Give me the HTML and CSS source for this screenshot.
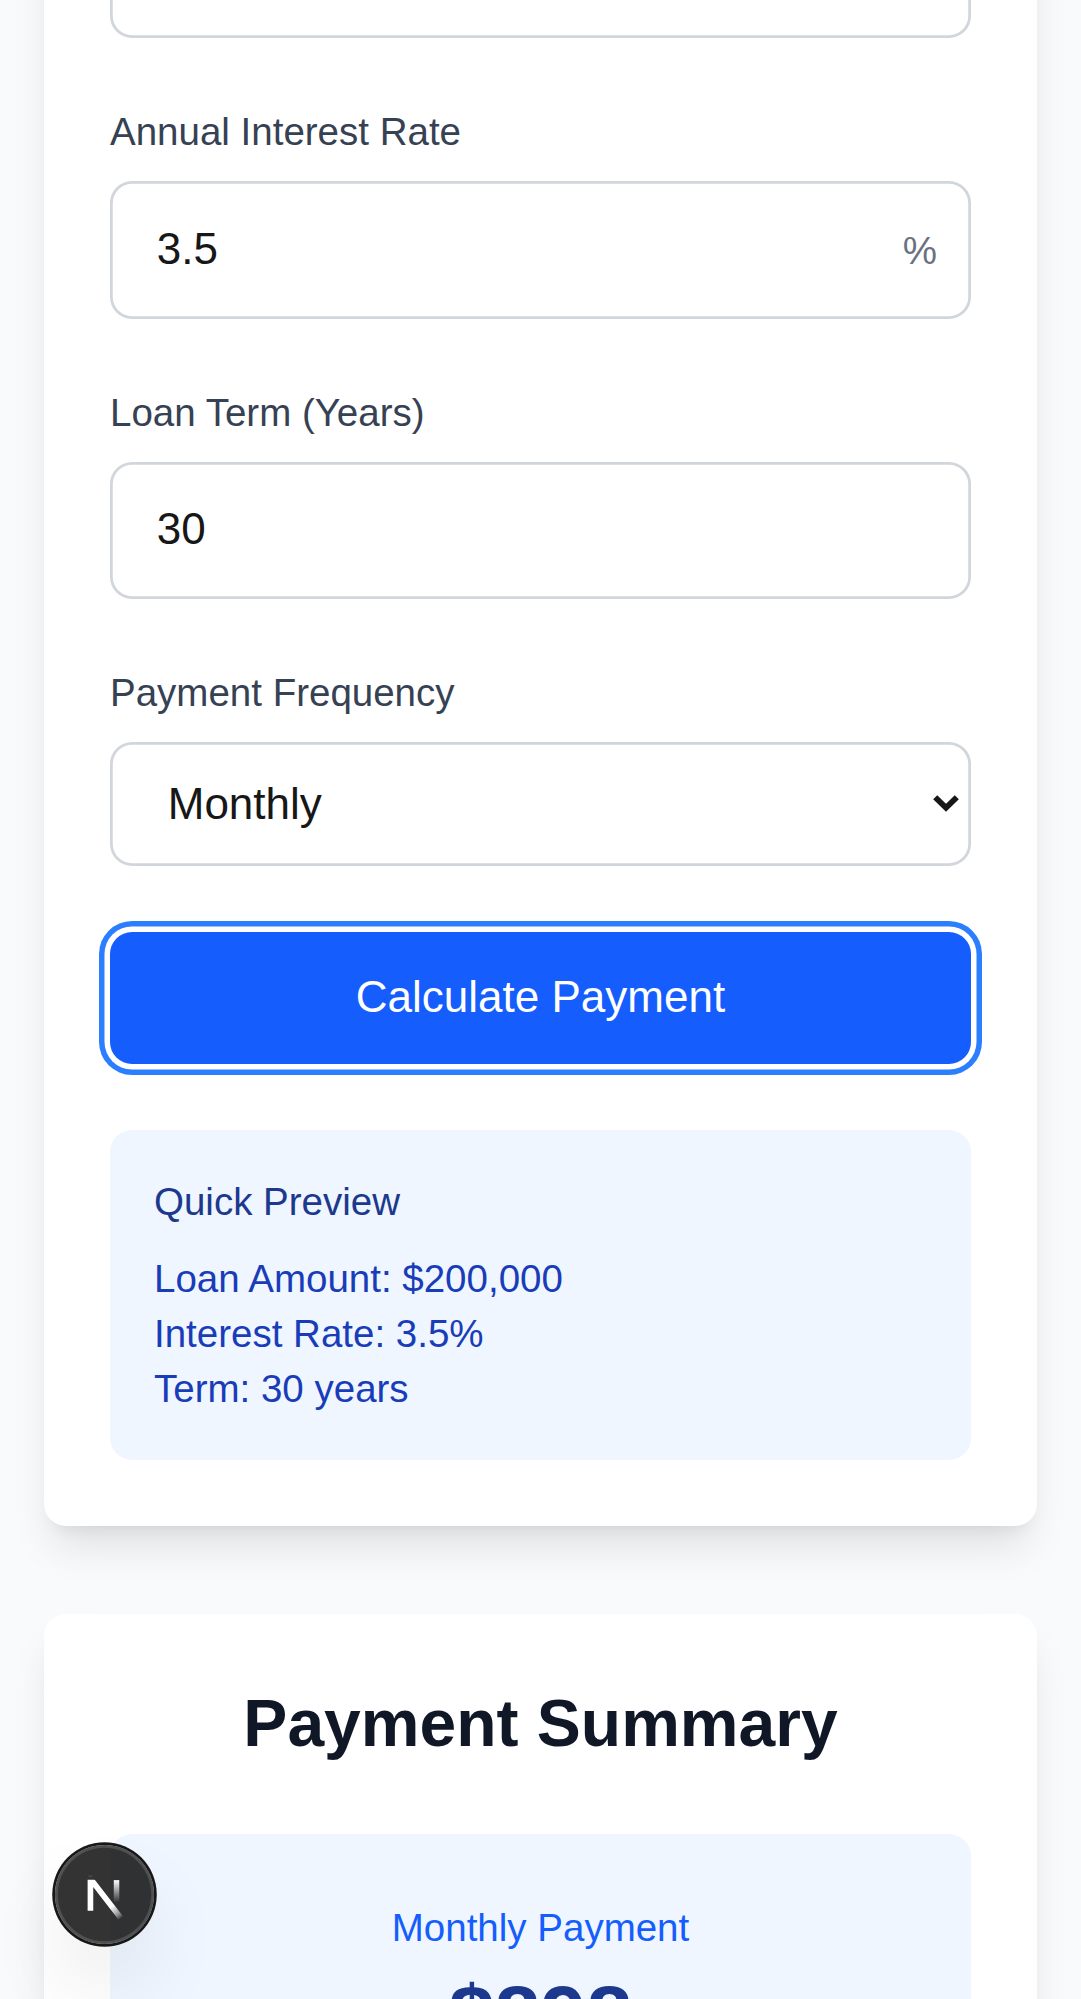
FILE: index.html
```html
<!DOCTYPE html>
<html lang="en">
<head>
<meta charset="utf-8">
<title>Loan Calculator</title>
<link rel="stylesheet" href="styles.css">
</head>
<body>
<main class="page">
  <form class="card card-form">
    <div class="control"></div>
    <div class="field">
      <label class="label" for="rate">Annual Interest Rate</label>
      <div class="control">
        <input class="input" id="rate" type="text" value="3.5">
        <span class="suffix">%</span>
      </div>
    </div>
    <div class="field">
      <label class="label" for="term">Loan Term (Years)</label>
      <div class="control">
        <input class="input" id="term" type="text" value="30">
      </div>
    </div>
    <div class="field">
      <span class="label">Payment Frequency</span>
      <div class="control control-select">
        <span class="select-value">Monthly</span>
        <svg class="chevron" viewBox="0 0 26 17" aria-hidden="true"><path d="M2.2 2.2 L13 12.8 L23.8 2.2" fill="none" stroke="#171717" stroke-width="5.8"/></svg>
      </div>
    </div>
    <button class="submit" type="button">Calculate Payment</button>
    <section class="preview">
      <h3 class="preview-title">Quick Preview</h3>
      <p>Loan Amount: $200,000</p>
      <p>Interest Rate: 3.5%</p>
      <p>Term: 30 years</p>
    </section>
  </form>

  <section class="card card-summary">
    <h2 class="summary-title">Payment Summary</h2>
    <div class="payment">
      <p class="payment-label">Monthly Payment</p>
      <p class="payment-value">$898</p>
    </div>
  </section>
</main>

<div class="badge">
  <svg class="badge-logo" viewBox="0 0 16 18" aria-hidden="true">
    <defs>
      <linearGradient id="diag" x1="9.955" y1="11.13" x2="13.6" y2="15.7" gradientUnits="userSpaceOnUse">
        <stop stop-color="#fff"/><stop offset=".6" stop-color="#fff" stop-opacity=".5"/><stop offset="1" stop-color="#fff" stop-opacity="0"/>
      </linearGradient>
      <linearGradient id="bar" x1="11.8" y1="1.5" x2="11.8" y2="9.6" gradientUnits="userSpaceOnUse">
        <stop stop-color="#fff"/><stop offset="1" stop-color="#fff" stop-opacity="0"/>
      </linearGradient>
      <clipPath id="top"><path d="M0 1.4H16V18H0Z"/></clipPath>
    </defs>
    <path d="M13.3 15.2 L2.34 1 V12.6" clip-path="url(#top)" fill="none" stroke="url(#diag)" stroke-width="2.05"/>
    <path d="M11.825 1.5 V9.6" fill="none" stroke="url(#bar)" stroke-width="2"/>
    <path d="M1.5 .05 H3.1" stroke="#5a5a5a" stroke-width=".3"/>
  </svg>
</div>
</body>
</html>
```
FILE: styles.css
```css
* {
  box-sizing: border-box;
  margin: 0;
}

html {
  height: 1999px;
  overflow: hidden;
}

body {
  height: 1999px;
  overflow: hidden;
  background: #f9fafb;
  color: #171717;
  font-family: "Liberation Sans", Arial, sans-serif;
  font-size: 38.5px;
  line-height: 55px;
}

.page {
  display: flex;
  flex-direction: column;
  gap: 88px;
  margin-top: -242.5px;
  padding: 0 44px;
}

.card {
  flex: none;
  display: flex;
  flex-direction: column;
  padding: 66px;
  border-radius: 22px;
  background: #fff;
  box-shadow: 0 27.5px 41.25px -8.25px rgba(0, 0, 0, .1), 0 11px 16.5px -11px rgba(0, 0, 0, .1);
}

.card-form {
  gap: 66px;
  padding-top: 143px;
}

.field {
  display: flex;
  flex-direction: column;
  gap: 22px;
}

.label {
  display: block;
  color: #364153;
}

.control {
  display: flex;
  align-items: center;
  height: 137.5px;
  padding: 0 34px 0 46.75px;
  border-radius: 22px;
  box-shadow: inset 0 0 0 2.75px #d1d5dc;
}

.input {
  flex: 1;
  min-width: 0;
  height: 66px;
  margin-bottom: 2px;
  padding: 0;
  border: 0;
  outline: 0;
  background: transparent;
  color: inherit;
  font: 44px/66px "Liberation Sans", Arial, sans-serif;
}

.suffix {
  padding-top: 2px;
  color: #6a7282;
}

.control-select {
  justify-content: space-between;
  height: 123.75px;
  padding: 0 12px 0 57.75px;
  font-size: 44px;
}

.chevron {
  width: 26px;
  height: 17px;
}

.submit {
  height: 132px;
  padding: 0 0 2px;
  border: 0;
  border-radius: 22px;
  background: #155dfc;
  box-shadow: 0 0 0 5.5px #fff, 0 0 0 11px #2b7fff;
  color: #fff;
  font: 44px/66px "Liberation Sans", Arial, sans-serif;
}

.preview {
  padding: 44px;
  border-radius: 22px;
  background: #eff6ff;
  color: #193cb8;
}

.preview-title {
  margin-bottom: 22px;
  color: #1c398e;
  font-size: 38.5px;
  font-weight: 400;
}

.card-summary {
  gap: 67px;
  padding-top: 65px;
}

.summary-title {
  color: #101828;
  font-size: 66px;
  line-height: 88px;
  text-align: center;
}

.payment {
  padding: 66px;
  border-radius: 22px;
  background: #eff6ff;
  text-align: center;
}

.payment-label {
  color: #155dfc;
}

.payment-value {
  margin-top: 11px;
  color: #1c398e;
  font-size: 82.5px;
  font-weight: 700;
  line-height: 99px;
}

.badge {
  position: fixed;
  bottom: 55px;
  left: 55px;
  width: 99px;
  height: 99px;
  padding: 31px 0 0 28.8px;
  border-radius: 50%;
  background: rgba(0, 0, 0, .8);
  box-shadow: 0 0 0 2.75px #171717, inset 0 0 0 2.75px rgba(255, 255, 255, .14), 0 44px 88px -22px rgba(0, 0, 0, .24);
}

.badge-logo {
  display: block;
  width: 44px;
  height: 49.5px;
  overflow: visible;
}
```
